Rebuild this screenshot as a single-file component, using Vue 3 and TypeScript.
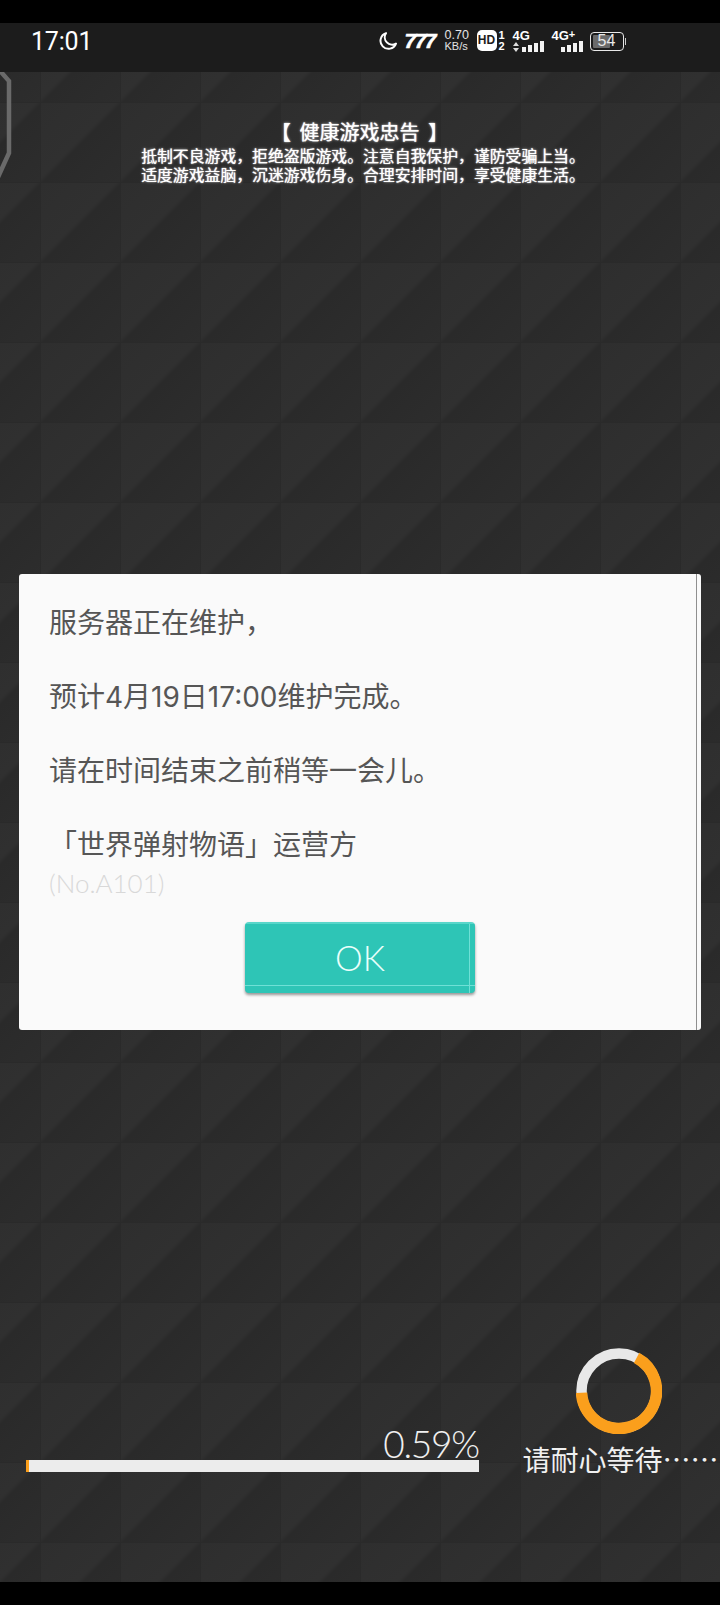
<script setup lang="ts">
const noticeLines = [
  '抵制不良游戏，拒绝盗版游戏。注意自我保护，谨防受骗上当。',
  '适度游戏益脑，沉迷游戏伤身。合理安排时间，享受健康生活。'
]

const messages = [
  '服务器正在维护，',
  '预计4月19日17:00维护完成。',
  '请在时间结束之前稍等一会儿。',
  '「世界弹射物语」运营方'
]

const progress = 0.59
const signalBars = [5, 7, 9, 11]
</script>

<template>
  <div class="screen">
    <div class="status-bar">
      <span class="time">17:01</span>
      <div class="status-icons">
        <svg class="moon" width="18" height="18" viewBox="0 0 18 18">
          <path d="M7 1.2A8 8 0 1 0 17 11.6 7.4 7.4 0 0 1 7 1.2Z" fill="none" stroke="#fff" stroke-width="2" stroke-linejoin="round" />
        </svg>
        <span class="sevens">777</span>
        <div class="speed"><span>0.70</span><span class="unit">KB/s</span></div>
        <span class="hd">HD</span>
        <div class="sims"><span>1</span><span>2</span></div>
        <div class="signal first">
          <span class="net">4G</span>
          <div class="bars">
            <svg width="6" height="10" viewBox="0 0 6 10">
              <path d="M3 0 6 4H0ZM0 6h6L3 10Z" fill="#ddd" />
            </svg>
            <i v-for="h in signalBars" :key="h" :style="{ height: h + 'px' }"></i>
          </div>
        </div>
        <div class="signal second">
          <span class="net">4G<sup>+</sup></span>
          <div class="bars">
            <i v-for="h in signalBars" :key="h" :style="{ height: h + 'px' }"></i>
          </div>
        </div>
        <div class="battery">
          <div class="level"></div>
          <span>54</span>
        </div>
        <span class="nub"></span>
      </div>
    </div>

    <main class="game">
      <svg class="corner" width="12" height="120" viewBox="0 0 12 120">
        <path d="M-6 -8 9 9V81L-6 114" fill="none" stroke="#6a6a6a" stroke-width="4.5" />
      </svg>

      <section class="notice">
        <h1>【 健康游戏忠告 】</h1>
        <p v-for="line in noticeLines" :key="line">{{ line }}</p>
      </section>

      <section class="dialog">
        <p v-for="msg in messages" :key="msg" class="msg">{{ msg }}</p>
        <p class="code">(No.A101)</p>
        <button class="ok" type="button">OK</button>
      </section>

      <section class="loading">
        <div class="progress">
          <div class="percent">{{ progress }}%</div>
          <div class="track">
            <div class="fill" :style="{ width: progress * 1.2 + '%' }"></div>
          </div>
        </div>
        <div class="wait">
          <svg width="86" height="86" viewBox="0 0 86 86">
            <circle cx="43" cy="43" r="37.5" fill="none" stroke="#e8e8e8" stroke-width="10.5" />
            <circle
              cx="43"
              cy="43"
              r="37.5"
              fill="none"
              stroke="#fb9f1c"
              stroke-width="11.5"
              pathLength="100"
              stroke-dasharray="66.5 33.5"
              transform="rotate(-62 43 43)"
            />
          </svg>
          <span class="wait-text">请耐心等待……</span>
        </div>
      </section>
    </main>

    <div class="nav-strip"></div>
  </div>
</template>

<style>
body {
  background: #000;
}
</style>

<style scoped>
.screen {
  width: 720px;
  height: 1605px;
  overflow: hidden;
  background: #000;
  padding-top: 23px;
  box-sizing: border-box;
  font-family: "Noto Sans CJK SC", "Noto Sans", sans-serif;
  display: flex;
  flex-direction: column;
}

.status-bar {
  height: 49px;
  flex: none;
  background: #1c1c1c;
  display: flex;
  justify-content: space-between;
  color: #fff;
  padding-left: 31px;
}

.time {
  font-family: Roboto, sans-serif;
  font-size: 25px;
  letter-spacing: -0.2px;
  line-height: 37px;
}

.status-icons {
  display: flex;
  align-items: flex-start;
  padding-right: 94px;
}

.moon {
  margin: 9px 8px 0 0;
}

.sevens {
  font-family: "Liberation Sans", sans-serif;
  font-size: 21px;
  font-weight: 700;
  font-style: italic;
  width: 33px;
  letter-spacing: -1.5px;
  line-height: 35px;
  margin-right: 7px;
  -webkit-text-stroke: 0.6px #fff;
}

.speed {
  display: flex;
  flex-direction: column;
  font-family: "Liberation Sans", sans-serif;
  font-size: 12.5px;
  line-height: 11px;
  margin: 7px 8px 0 0;
  color: #e4e4e4;
  width: 24px;
}

.speed .unit {
  font-size: 11px;
}

.hd {
  width: 20px;
  height: 21px;
  margin-top: 7px;
  background: #fff;
  color: #1c1c1c;
  border-radius: 5px;
  font-family: "Liberation Sans", sans-serif;
  font-size: 12px;
  font-weight: 700;
  line-height: 21px;
  text-align: center;
}

.sims {
  display: flex;
  flex-direction: column;
  font-family: "Liberation Sans", sans-serif;
  font-size: 11px;
  font-weight: 700;
  line-height: 11px;
  width: 8px;
  margin: 7px 7px 0 1px;
  text-align: center;
}

.signal {
  display: flex;
  flex-direction: column;
  margin-top: 8px;
}

.signal.first {
  width: 31px;
  margin-right: 8px;
}

.signal.second {
  width: 31px;
  margin-right: 7px;
}

.net {
  font-family: "Liberation Sans", sans-serif;
  font-size: 13px;
  font-weight: 700;
  line-height: 10px;
  height: 10px;
}

.net sup {
  font-size: 11px;
  line-height: 0;
  vertical-align: 2px;
}

.bars {
  display: flex;
  align-items: flex-end;
  justify-content: flex-end;
  gap: 2px;
  height: 11px;
}

.bars svg {
  margin-right: 1px;
}

.bars i {
  width: 4px;
  background: #f2f2f2;
}

.battery {
  position: relative;
  width: 34px;
  height: 19px;
  margin-top: 9px;
  border: 1.5px solid #e8e8e8;
  border-radius: 4px;
  box-sizing: border-box;
  text-align: center;
  font-family: "Liberation Sans", sans-serif;
  font-size: 16px;
  line-height: 16px;
  color: #e8e8e8;
}

.battery span {
  position: relative;
}

.level {
  position: absolute;
  left: 2px;
  top: 2px;
  bottom: 2px;
  width: 17px;
  background: #6a6a6a;
  border-radius: 1px;
}

.nub {
  width: 1.5px;
  height: 7px;
  margin: 15px 0 0 1px;
  background: #ccc;
}

.game {
  position: relative;
  height: 1510px;
  flex: none;
  box-sizing: border-box;
  background-color: #2c2c2c;
  background-image:
    linear-gradient(90deg, #2a2a2a 0 1px, transparent 1px),
    linear-gradient(180deg, #2a2a2a 0 1px, transparent 1px),
    linear-gradient(135deg, #2e2e2e 0, #303030 48%, #2a2a2a 52%, #2d2d2d 100%);
  background-size: 80px 80px;
  background-position: 40px 30px;
  padding-top: 46px;
  display: flex;
  flex-direction: column;
}

.corner {
  position: absolute;
  left: 0;
  top: 0;
}

.notice {
  text-align: center;
  color: #fff;
  text-shadow: 0 0 1px #fff, 0 0 3px rgba(255, 255, 255, 0.6);
}

.notice h1 {
  margin: 0 0 0 -1px;
  font-size: 20px;
  font-weight: 400;
  word-spacing: 4px;
  line-height: 28px;
}

.notice p {
  margin: 0 0 0 6px;
  font-size: 15.85px;
  font-weight: 400;
  line-height: 19px;
  white-space: nowrap;
}

.dialog {
  position: relative;
  box-sizing: border-box;
  width: 682px;
  height: 456px;
  margin: 390px 0 0 19px;
  padding: 24px 0 0 30px;
  background: #fafafa;
  border-radius: 3px;
  display: flex;
  flex-direction: column;
}

.dialog::after {
  content: "";
  position: absolute;
  top: 0;
  bottom: 0;
  right: 4px;
  width: 1.5px;
  background: #8f8f8f;
}

.msg {
  margin: 0 0 24px;
  height: 50px;
  font-family: Inter, "Noto Sans CJK SC", sans-serif;
  font-size: 28px;
  line-height: 50px;
  color: #565656;
  white-space: nowrap;
}

.msg:nth-of-type(4) {
  margin-bottom: 0;
}

.code {
  margin: 0;
  height: 26px;
  font-family: Lato, sans-serif;
  font-weight: 300;
  font-size: 26px;
  line-height: 26px;
  color: #d8d8d8;
}

.ok {
  width: 230px;
  height: 71px;
  margin: 26px 0 0 196px;
  padding: 0;
  border: none;
  border-radius: 4px;
  background:
    linear-gradient(#58d6ca, #58d6ca) 0 0 / 100% 2px no-repeat,
    linear-gradient(#6fe0d6, #6fe0d6) 0 63px / 100% 1px no-repeat,
    linear-gradient(#6fe0d6, #6fe0d6) 224px 0 / 1px 100% no-repeat,
    #2ec5b6;
  box-shadow: 0 2px 3px rgba(0, 0, 0, 0.4);
  color: #eafffb;
  font-family: Lato, sans-serif;
  font-weight: 300;
  font-size: 35px;
  line-height: 71px;
}

.loading {
  display: flex;
  align-items: flex-start;
  margin-top: 318px;
  padding-left: 26px;
}

.progress {
  width: 453px;
  margin-top: 78px;
  margin-right: 45px;
}

.percent {
  font-family: Lato, sans-serif;
  font-weight: 300;
  font-size: 37px;
  letter-spacing: -1.2px;
  line-height: 36px;
  color: #f0f0f0;
  text-align: right;
}

.track {
  height: 12px;
  margin-top: -2px;
  background: #ececec;
  overflow: hidden;
}

.fill {
  height: 100%;
  background: #fb9f1c;
}

.wait {
  width: 196px;
  display: flex;
  flex-direction: column;
  align-items: center;
}

.wait svg {
  margin-right: 6px;
}

.wait-text {
  font-size: 28px;
  line-height: 34px;
  margin-top: 8px;
  margin-left: -3px;
  color: #f0f0f0;
  white-space: nowrap;
}

.nav-strip {
  flex: 1;
  background: #000;
}
</style>
